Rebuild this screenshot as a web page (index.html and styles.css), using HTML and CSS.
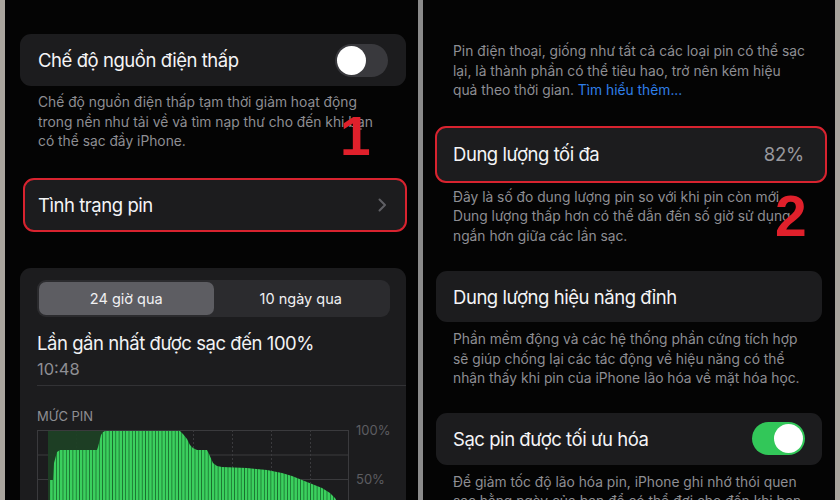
FILE: index.html
```html
<!DOCTYPE html>
<html lang="vi">
<head>
<meta charset="utf-8">
<link rel="stylesheet" href="styles.css">
</head>
<body>
<div class="frame">
  <div class="edge"></div>
  <div class="phone phone-left">
    <div class="card row">
      <span class="row-title">Chế độ nguồn điện thấp</span>
      <span class="switch"><span class="knob"></span></span>
    </div>
    <p class="foot foot-1">Chế độ nguồn điện thấp tạm thời giảm hoạt động<br>trong nền như tải về và tìm nạp thư cho đến khi bạn<br>có thể sạc đầy iPhone.</p>
    <div class="card row red red-left">
      <span class="row-title">Tình trạng pin</span>
      <svg class="chev" width="9" height="14" viewBox="0 0 9 14"><polyline points="1.5,1.5 7,7 1.5,12.5" fill="none" stroke="#5f5f64" stroke-width="2" stroke-linecap="round" stroke-linejoin="round"/></svg>
    </div>
    <div class="card usage">
      <div class="seg">
        <div class="seg-item active">24 giờ qua</div>
        <div class="seg-item">10 ngày qua</div>
      </div>
      <div class="last">Lần gần nhất được sạc đến 100%</div>
      <div class="time">10:48</div>
      <div class="sep"></div>
      <div class="level">MỨC PIN</div>
      <div class="chart">
        <svg class="chart-svg" width="313" height="100" viewBox="0 0 313 100">
          <defs>
            <pattern id="bars" width="3.3" height="10" patternUnits="userSpaceOnUse">
              <rect width="3.3" height="10" fill="#166b2b"/>
              <rect width="2.5" height="10" fill="#3bd05e"/>
            </pattern>
          </defs>
          <g stroke="#3a3a3d" stroke-width="1">
            <line x1="0" y1="0.5" x2="312" y2="0.5"/>
            <line x1="0" y1="25" x2="312" y2="25"/>
            <line x1="0" y1="49.5" x2="312" y2="49.5"/>
            <line x1="0" y1="74" x2="312" y2="74"/>
            <line x1="0.5" y1="0" x2="0.5" y2="100"/>
            <line x1="311.5" y1="0" x2="311.5" y2="100"/>
          </g>
          <g stroke="#3a3a3d" stroke-width="1" stroke-dasharray="2 2">
            <line x1="39.5" y1="0" x2="39.5" y2="100"/>
            <line x1="78.5" y1="0" x2="78.5" y2="100"/>
            <line x1="117.5" y1="0" x2="117.5" y2="100"/>
            <line x1="156.5" y1="0" x2="156.5" y2="100"/>
            <line x1="195.5" y1="0" x2="195.5" y2="100"/>
            <line x1="234.5" y1="0" x2="234.5" y2="100"/>
            <line x1="273.5" y1="0" x2="273.5" y2="100"/>
          </g>
          <rect x="11" y="1" width="55" height="99" fill="#1e4025" opacity="0.95"/>
          <polygon fill="url(#bars)" points="13,100 13,50 16,50 17,33 20,22 23,20 60,20 61,17 64,5 66,2 68,1 143,1 146,4 150,9 153,15 156,18 160,20 170,20 172,24 176,33 180,36 185,37 210,38 230,40 245,43 255,46 265,50 275,54 285,58 293,63 298,68 302,75 302,100"/>
        </svg>
        <div class="axis">
          <span class="axis-top">100%</span>
          <span class="axis-mid">50%</span>
        </div>
      </div>
    </div>
  </div>
  <div class="divider"></div>
  <div class="phone phone-right">
    <p class="foot foot-intro">Pin điện thoại, giống như tất cả các loại pin có thể sạc<br>lại, là thành phần có thể tiêu hao, trở nên kém hiệu<br>quả theo thời gian. <span class="link">Tìm hiểu thêm...</span></p>
    <div class="card row red red-right">
      <span class="row-title">Dung lượng tối đa</span>
      <span class="value">82%</span>
    </div>
    <p class="foot foot-2">Đây là số đo dung lượng pin so với khi pin còn mới.<br>Dung lượng thấp hơn có thể dẫn đến số giờ sử dụng<br>ngắn hơn giữa các lần sạc.</p>
    <div class="card row row-peak">
      <span class="row-title">Dung lượng hiệu năng đỉnh</span>
    </div>
    <p class="foot foot-3">Phần mềm động và các hệ thống phần cứng tích hợp<br>sẽ giúp chống lại các tác động về hiệu năng có thể<br>nhận thấy khi pin của iPhone lão hóa về mặt hóa học.</p>
    <div class="card row row-opt">
      <span class="row-title">Sạc pin được tối ưu hóa</span>
      <span class="switch on"><span class="knob"></span></span>
    </div>
    <p class="foot foot-4">Để giảm tốc độ lão hóa pin, iPhone ghi nhớ thói quen<br>sạc hằng ngày của bạn để có thể đợi cho đến khi bạn<br>cần sử dụng iPhone mới sạc quá 80%.</p>
  </div>
  <div class="edge"></div>
  <span class="marker marker-1">1</span>
  <span class="marker marker-2">2</span>
</div>
</body>
</html>
```

FILE: styles.css
```css
* { box-sizing: border-box; }
html, body {
  margin: 0;
  padding: 0;
  width: 840px;
  height: 500px;
  overflow: hidden;
  background: #000;
}
.frame {
  position: relative;
  display: flex;
  width: 840px;
  height: 500px;
  overflow: hidden;
  font-family: Inter, "Noto Sans", "DejaVu Sans", sans-serif;
  color: #f2f2f4;
}
.edge {
  width: 5px;
  flex: none;
  background: #a9a59e;
}
.divider {
  width: 5px;
  flex: none;
  background: #8b8b8b;
}
.phone {
  background: #040404;
  display: flex;
  flex-direction: column;
  overflow: hidden;
}
.phone-left {
  width: 413px;
  padding: 34px 12px 0 15px;
}
.phone-right {
  width: 412px;
  padding: 42px 13px 0 13px;
}
.card {
  background: #1c1c1e;
  border-radius: 11px;
  flex: none;
}
.row {
  display: flex;
  align-items: center;
  justify-content: space-between;
  height: 52px;
  padding: 0 18px 0 18px;
}
.row-title {
  font-size: 18.5px;
  letter-spacing: -0.45px;
  color: #f4f4f6;
  white-space: nowrap;
}
.red {
  border: 2px solid #d8232f;
}
.red-left {
  height: 54px;
  margin: 26px -1px 0 3px;
  padding: 0 17px 0 13px;
}
.phone-right .row { padding-left: 17px; padding-right: 17px; }
.phone-right .red-right {
  height: 57px;
  margin: 25px -5px 0 -1px;
  padding: 0 21px 0 16px;
}
.row-peak {
  height: 51px;
  margin-top: 25px;
}
.row-opt { margin-top: 24px; }
.value {
  font-size: 18.5px;
  letter-spacing: -0.2px;
  color: #98989d;
}
.chev { margin-right: 1px; }
.switch {
  position: relative;
  width: 53px;
  height: 33px;
  border-radius: 17px;
  background: #39393d;
  flex: none;
}
.switch .knob {
  position: absolute;
  top: 2px;
  left: 2px;
  width: 29px;
  height: 29px;
  border-radius: 50%;
  background: #fff;
}
.switch.on { background: #32c759; }
.switch.on .knob { left: auto; right: 2px; }
.foot {
  margin: 0;
  font-size: 13.8px;
  line-height: 19.5px;
  color: #8e8e93;
  padding: 0 4px 0 18px;
  white-space: nowrap;
  flex: none;
}
.phone-right .foot { padding-left: 17px; padding-right: 4px; }
.foot-1 { margin-top: 7px; }
.foot-2 { margin-top: 5px; }
.foot-3 { margin-top: 8px; }
.foot-4 { margin-top: 8px; }
.link { color: #2f7fe8; }
.usage {
  margin-top: 36px;
  padding: 12px 16px 0 17px;
  height: 300px;
}
.seg {
  display: flex;
  height: 37px;
  padding: 2px;
  border-radius: 9px;
  background: #2b2b2e;
}
.seg-item {
  flex: 1;
  display: flex;
  align-items: center;
  justify-content: center;
  font-size: 14.5px;
  color: #f0f0f2;
  border-radius: 7px;
}
.seg-item.active { background: #5d5d62; }
.last {
  margin-top: 14px;
  font-size: 18.5px;
  letter-spacing: -0.45px;
  line-height: 24px;
}
.time {
  margin-top: 4px;
  font-size: 16.5px;
  line-height: 20px;
  color: #8e8e93;
}
.sep {
  margin: 6px -16px 0 0;
  height: 1px;
  background: #323235;
}
.level {
  margin-top: 22px;
  font-size: 13px;
  line-height: 16px;
  color: #8e8e93;
}
.chart {
  margin-top: 6px;
  display: flex;
  gap: 6px;
}
.chart-svg { display: block; flex: none; }
.axis {
  display: flex;
  flex-direction: column;
  font-size: 13px;
  line-height: 14px;
  color: #5d5d61;
}
.axis-top { margin-top: -7px; }
.axis-mid { margin-top: 35px; }
.marker {
  position: absolute;
  font-family: "Liberation Sans", Arial, sans-serif;
  font-weight: 700;
  line-height: 54px;
  color: #e0202b;
}
.marker-1 {
  left: 340px;
  top: 109px;
  font-size: 55px;
}
.marker-2 {
  left: 775px;
  top: 189px;
  font-size: 57px;
}
```
